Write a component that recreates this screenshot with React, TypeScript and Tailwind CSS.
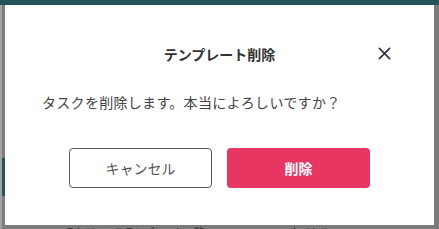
import React from 'react';

const jpFont = { fontFamily: '"Noto Sans CJK JP", "Noto Sans", sans-serif' };

const CloseIcon: React.FC<{ className?: string }> = ({ className }) => (
  <svg viewBox="0 0 14 14" className={className} fill="none" stroke="currentColor" strokeWidth="1.8" strokeLinecap="round">
    <path d="M1.5 1.5 L12.5 12.5 M12.5 1.5 L1.5 12.5" />
  </svg>
);

const BackgroundPage: React.FC = () => (
  <div className="flex h-full w-full flex-col bg-[#7b7b7b]">
    {/* header strip behind overlay */}
    <div className="h-[5px] w-full bg-[#24535c]" />
    <div className="flex flex-1">
      <div className="flex w-[5px] flex-col">
        <div className="h-[153px] w-full bg-[#7d7d7d] border-l-2 border-[#a2a2a2]" />
        <div className="h-[38px] w-full bg-[#24535c] border-l-2 border-[#a2a2a2]" />
        <div className="flex-1 w-full bg-[#7d7d7d] border-l-2 border-[#a2a2a2]" />
      </div>
      <div className="flex flex-1 flex-col justify-end">
        <div className="relative h-[4px] overflow-hidden text-[10px] leading-[12px] text-[#2c2c2c]" style={jpFont}>
          <span className="absolute left-[60px] top-[1px] whitespace-nowrap">スケジュールテンプレート一覧</span>
          <span className="absolute left-[285px] top-[1px] whitespace-nowrap">タイトル</span>
        </div>
      </div>
    </div>
  </div>
);

export default function App() {
  return (
    <div className="relative h-[229px] w-[439px] overflow-hidden" style={jpFont}>
      <BackgroundPage />
      <div className="absolute left-[5px] top-[5px] flex h-[220px] w-[429px] flex-col bg-white">
        <div className="relative pt-[39px]">
          <h2 className="text-center text-[14px] font-bold leading-[20px] text-[#333333]">テンプレート削除</h2>
          <button className="absolute right-[43px] top-[42px] text-[#2f3140]">
            <CloseIcon className="h-[13px] w-[13px]" />
          </button>
        </div>
        <p className="mt-[28px] pl-[37px] text-[14px] leading-[20px] tracking-[0.3px] text-[#444444]">
          タスクを削除します。本当によろしいですか？
        </p>
        <div className="mt-[36px] flex justify-center gap-[15px]">
          <button className="h-[40px] w-[143px] rounded-[4px] border border-[#5a5a5a] bg-white text-[14px] text-[#555555]">
            キャンセル
          </button>
          <button className="h-[40px] w-[143px] rounded-[4px] bg-[#e83662] text-[14px] font-bold text-white">
            削除
          </button>
        </div>
      </div>
    </div>
  );
}
